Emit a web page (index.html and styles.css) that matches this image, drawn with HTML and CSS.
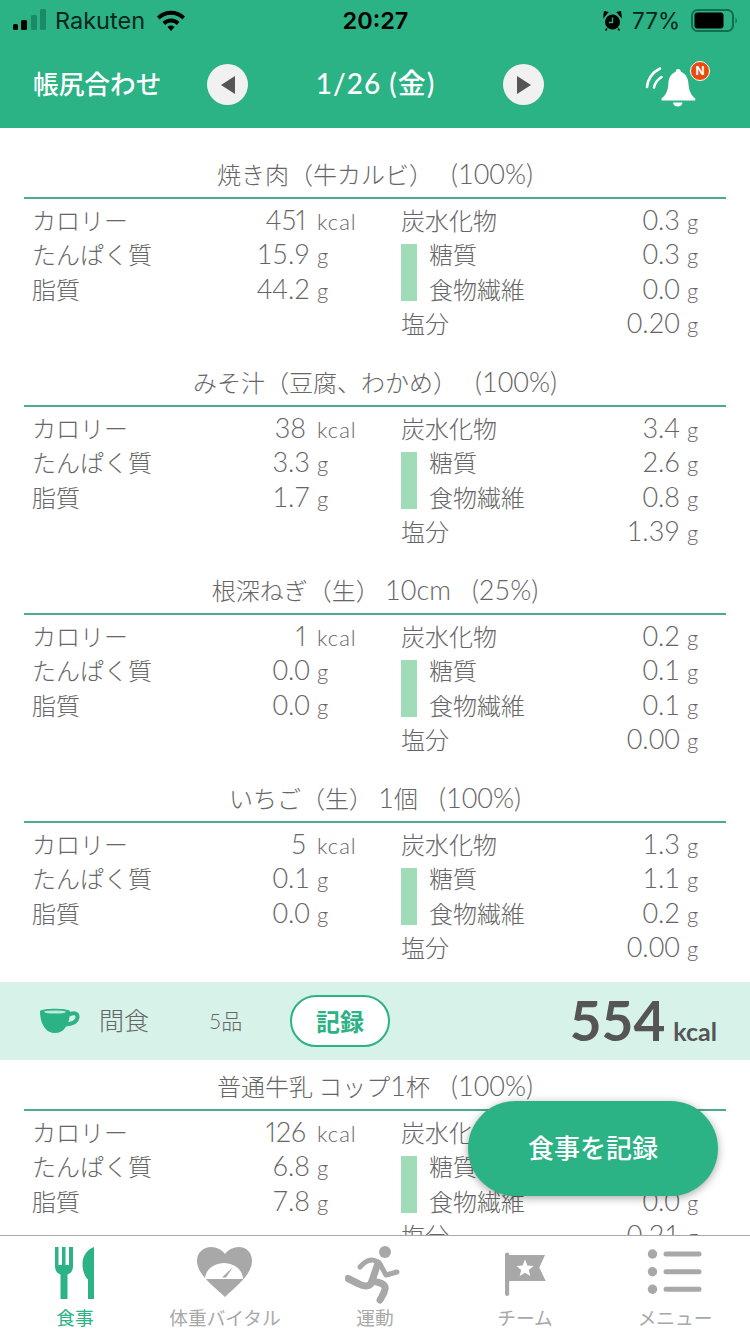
FILE: index.html
```html
<!DOCTYPE html>
<html lang="ja">
<head>
<meta charset="utf-8">
<title>食事</title>
<link rel="stylesheet" href="styles.css">
</head>
<body>
<div class="app">
  <header class="top">
    <div class="status">
      <div class="status-side">
        <svg class="signal" width="34" height="22" viewBox="0 0 34 22"><rect class="on" x="0" y="15" width="5" height="6" rx="1.5"/><rect class="on" x="8" y="11" width="6" height="10" rx="1.5"/><rect class="off" x="18" y="6" width="6" height="15" rx="1.5"/><rect class="off" x="27" y="0" width="6" height="21" rx="1.5"/></svg>
        <span class="carrier">Rakuten</span>
        <svg class="wifi" width="30" height="22" viewBox="0 0 30 22"><path d="M1 7.5a20 20 0 0 1 28 0l-2.6 3a16 16 0 0 0-22.800 0z"/><path d="M6.500 13a12 12 0 0 1 17 0l-2.700 3a8 8 0 0 0-11.600 0z"/><path d="M11.500 18a5 5 0 0 1 7 0L15 22z"/></svg>
      </div>
      <div class="clock">20:27</div>
      <div class="status-side end">
        <svg class="alarm" width="19" height="20" viewBox="0 0 19 20"><circle cx="9.500" cy="11" r="7.500"/><path d="M1 5.500 4.500 1.500 1.500.8zM18 5.500 14.500 1.500 17.500.8zM4 17.500 2.500 19.500M15 17.500 16.500 19.500" stroke="#000" stroke-width="1.400"/><path class="hands" d="M9.500 6.500V11.500H6"/></svg>
        <span class="percent">77%</span>
        <svg class="battery" width="47" height="24" viewBox="0 0 47 24"><rect class="shell" x="1" y="1" width="41" height="21" rx="5.500"/><rect x="3.500" y="3.500" width="29" height="16" rx="3"/><path class="cap" d="M44.500 8.500a4 4 0 0 1 0 6z"/></svg>
      </div>
    </div>
    <nav class="datebar">
      <h1 class="screen-title">帳尻合わせ</h1>
      <button class="step"><svg width="16" height="20" viewBox="0 0 16 20"><path d="M15 1V19L1 10z"/></svg></button>
      <div class="date">1/26 (金)</div>
      <button class="step"><svg width="16" height="20" viewBox="0 0 16 20"><path d="M1 1V19L15 10z"/></svg></button>
      <div class="bell">
        <svg width="67" height="50" viewBox="0 0 67 50"><path class="waves" d="M2 26C3 17 8 11 15 7.500M9 26.500C10 22 12.500 18.500 16.500 16"/><path class="body" d="M32.700 8c2 0 3 1.200 3.300 2.800C41 13 43 17 43.500 23c.5 7 2.500 11 6.800 14.500V39.500H16.500V37.500C20.800 34 23 30 23.300 23c.3-6 2.400-10 7.300-12.200.3-1.600 1.100-2.800 2.100-2.800z"/><path class="body" d="M28 41.500H37.500a4.800 4.800 0 0 1-9.500 0z"/></svg>
        <span class="badge">N</span>
      </div>
    </nav>
  </header>

  <main class="content">
    <section class="foods first">
      <article class="food">
        <h2 class="food-title">焼き肉（牛カルビ）<span class="lat pad">(100%)</span></h2>
        <div class="facts">
          <div class="col-left">
            <div class="fact"><span class="name">カロリー</span><span class="num int">451</span><span class="unit kcal">kcal</span></div>
            <div class="fact"><span class="name">たんぱく質</span><span class="num">15.9</span><span class="unit">g</span></div>
            <div class="fact"><span class="name">脂質</span><span class="num">44.2</span><span class="unit">g</span></div>
          </div>
          <div class="col-right">
            <div class="fact"><span class="name">炭水化物</span><span class="num">0.3</span><span class="unit">g</span></div>
            <div class="sub"><i class="bar"></i><div class="sub-rows">
              <div class="fact"><span class="name">糖質</span><span class="num">0.3</span><span class="unit">g</span></div>
              <div class="fact"><span class="name">食物繊維</span><span class="num">0.0</span><span class="unit">g</span></div>
            </div></div>
            <div class="fact"><span class="name">塩分</span><span class="num">0.20</span><span class="unit">g</span></div>
          </div>
        </div>
      </article>
      <article class="food">
        <h2 class="food-title">みそ汁（豆腐、わかめ）<span class="lat pad">(100%)</span></h2>
        <div class="facts">
          <div class="col-left">
            <div class="fact"><span class="name">カロリー</span><span class="num int">38</span><span class="unit kcal">kcal</span></div>
            <div class="fact"><span class="name">たんぱく質</span><span class="num">3.3</span><span class="unit">g</span></div>
            <div class="fact"><span class="name">脂質</span><span class="num">1.7</span><span class="unit">g</span></div>
          </div>
          <div class="col-right">
            <div class="fact"><span class="name">炭水化物</span><span class="num">3.4</span><span class="unit">g</span></div>
            <div class="sub"><i class="bar"></i><div class="sub-rows">
              <div class="fact"><span class="name">糖質</span><span class="num">2.6</span><span class="unit">g</span></div>
              <div class="fact"><span class="name">食物繊維</span><span class="num">0.8</span><span class="unit">g</span></div>
            </div></div>
            <div class="fact"><span class="name">塩分</span><span class="num">1.39</span><span class="unit">g</span></div>
          </div>
        </div>
      </article>
      <article class="food">
        <h2 class="food-title">根深ねぎ（生） <span class="lat">10cm</span><span class="lat near">(25%)</span></h2>
        <div class="facts">
          <div class="col-left">
            <div class="fact"><span class="name">カロリー</span><span class="num int">1</span><span class="unit kcal">kcal</span></div>
            <div class="fact"><span class="name">たんぱく質</span><span class="num">0.0</span><span class="unit">g</span></div>
            <div class="fact"><span class="name">脂質</span><span class="num">0.0</span><span class="unit">g</span></div>
          </div>
          <div class="col-right">
            <div class="fact"><span class="name">炭水化物</span><span class="num">0.2</span><span class="unit">g</span></div>
            <div class="sub"><i class="bar"></i><div class="sub-rows">
              <div class="fact"><span class="name">糖質</span><span class="num">0.1</span><span class="unit">g</span></div>
              <div class="fact"><span class="name">食物繊維</span><span class="num">0.1</span><span class="unit">g</span></div>
            </div></div>
            <div class="fact"><span class="name">塩分</span><span class="num">0.00</span><span class="unit">g</span></div>
          </div>
        </div>
      </article>
      <article class="food">
        <h2 class="food-title">いちご（生） <span class="lat">1</span>個<span class="lat near">(100%)</span></h2>
        <div class="facts">
          <div class="col-left">
            <div class="fact"><span class="name">カロリー</span><span class="num int">5</span><span class="unit kcal">kcal</span></div>
            <div class="fact"><span class="name">たんぱく質</span><span class="num">0.1</span><span class="unit">g</span></div>
            <div class="fact"><span class="name">脂質</span><span class="num">0.0</span><span class="unit">g</span></div>
          </div>
          <div class="col-right">
            <div class="fact"><span class="name">炭水化物</span><span class="num">1.3</span><span class="unit">g</span></div>
            <div class="sub"><i class="bar"></i><div class="sub-rows">
              <div class="fact"><span class="name">糖質</span><span class="num">1.1</span><span class="unit">g</span></div>
              <div class="fact"><span class="name">食物繊維</span><span class="num">0.2</span><span class="unit">g</span></div>
            </div></div>
            <div class="fact"><span class="name">塩分</span><span class="num">0.00</span><span class="unit">g</span></div>
          </div>
        </div>
      </article>
    </section>

    <section class="meal-band">
      <svg class="cup" width="40" height="26" viewBox="0 0 40 26"><path d="M0 3C3 0 27 0 30 3 30 15 25 25 15 25 5 25 0 15 0 3z"/><path class="cup-handle" d="M29 7C33 4 38 5 37.500 9.500 37 14 31 16 26 16.500"/><ellipse class="milk" cx="15" cy="4" rx="11" ry="1.600"/></svg>
      <span class="meal-name">間食</span>
      <span class="meal-count">5品</span>
      <button class="record">記録</button>
      <div class="meal-total"><b>554</b><span>kcal</span></div>
    </section>

    <section class="foods">
      <article class="food">
        <h2 class="food-title">普通牛乳 コップ<span class="lat">1</span>杯<span class="lat near">(100%)</span></h2>
        <div class="facts">
          <div class="col-left">
            <div class="fact"><span class="name">カロリー</span><span class="num int">126</span><span class="unit kcal">kcal</span></div>
            <div class="fact"><span class="name">たんぱく質</span><span class="num">6.8</span><span class="unit">g</span></div>
            <div class="fact"><span class="name">脂質</span><span class="num">7.8</span><span class="unit">g</span></div>
          </div>
          <div class="col-right">
            <div class="fact"><span class="name">炭水化物</span><span class="num">9.9</span><span class="unit">g</span></div>
            <div class="sub"><i class="bar"></i><div class="sub-rows">
              <div class="fact"><span class="name">糖質</span><span class="num">9.9</span><span class="unit">g</span></div>
              <div class="fact"><span class="name">食物繊維</span><span class="num">0.0</span><span class="unit">g</span></div>
            </div></div>
            <div class="fact"><span class="name">塩分</span><span class="num">0.21</span><span class="unit">g</span></div>
          </div>
        </div>
      </article>
    </section>
  </main>

  <button class="fab">食事を記録</button>

  <footer class="tabs">
    <div class="tab active">
      <svg width="60" height="60" viewBox="0 0 60 60"><path d="M10 3H13.500V21H17V3H20.500V21H24V3H28V22C28 27 25.500 29.500 22.500 30.500V55H15.500V30.500C12.500 29.500 10 27 10 22z"/><path d="M49 3V55H43V35.500C40 33 37.500 27 37.500 20 37.500 11 43 5 49 3z"/></svg>
      <span>食事</span>
    </div>
    <div class="tab">
      <svg width="60" height="60" viewBox="0 0 60 60"><path d="M30 53C20 43 2 31 2 17 2 8 9 3 16 3 22 3 27 6 30 10 33 6 38 3 44 3 51 3 57 8 57 17 57 31 40 43 30 53z"/><path class="cut" d="M10 35C10 26 19 19 29 19 39 19 48 26 48 35z"/><path class="needle" d="M27 33.500 38 23 31 33.500z"/></svg>
      <span>体重バイタル</span>
    </div>
    <div class="tab">
      <svg width="60" height="60" viewBox="0 0 60 60"><circle cx="40" cy="8" r="6"/><path class="limb wide" d="M33 19 27 37M27 37C34 38 41 40 40 45 39.500 49 37 52 35 56"/><path class="limb wide" d="M27 37C26 43 19 43 14 40 10 38 6 36 3 34.500"/><path class="limb" d="M33 18C27 14 21 16 15 23"/><path class="limb" d="M35 20 41 31 52 28"/></svg>
      <span>運動</span>
    </div>
    <div class="tab">
      <svg width="60" height="60" viewBox="0 0 60 60"><path d="M10 10.500a2.100 2.100 0 0 1 4.200 0V11H50L44.300 23.500 50.700 37H14.200V50a2.100 2.100 0 0 1-4.200 0z"/><path class="cut" d="M30 15.500 32.400 21.500 38.500 21.900 33.800 25.900 35.300 32 30 28.700 24.700 32 26.200 25.900 21.500 21.900 27.600 21.500z"/></svg>
      <span>チーム</span>
    </div>
    <div class="tab">
      <svg width="60" height="60" viewBox="0 0 60 60"><circle cx="7.500" cy="10" r="4.700"/><circle cx="7.500" cy="27.700" r="4.700"/><circle cx="7.500" cy="45.300" r="4.700"/><path class="limb" d="M21 10H54M21 27.700H54M21 45.300H54"/></svg>
      <span>メニュー</span>
    </div>
  </footer>
</div>
</body>
</html>
```

FILE: styles.css
```css
* { box-sizing: border-box; }

html, body {
  margin: 0;
  width: 750px;
  height: 1334px;
  overflow: hidden;
  background: #fff;
}

body {
  font-family: "Lato", "Noto Sans CJK JP", sans-serif;
  color: #666;
}

.app {
  position: relative;
  display: flex;
  flex-direction: column;
  width: 750px;
  height: 1334px;
}

/* Green header with the system status row */
.top {
  flex: none;
  height: 128px;
  background: #2bb285;
}

.status {
  display: flex;
  align-items: center;
  height: 41px;
  padding: 0 12px 0 13px;
  color: #000;
  font-family: "Inter", "Liberation Sans", sans-serif;
  font-size: 23.500px;
}

.status-side {
  flex: 1;
  display: flex;
  align-items: center;
}

.status-side.end { justify-content: flex-end; }

.signal { margin-right: 8px; margin-top: -2px; }
.signal .on { fill: #000; }
.signal .off { fill: #1c8a66; }

.carrier { margin-right: 11px; color: #04261b; }
.wifi { margin-top: -2px; }

.clock { font-weight: 600; font-size: 23.500px; }

.alarm { margin-right: 10px; }
.alarm .hands { fill: none; stroke: #2bb285; stroke-width: 1.4; }

.percent { margin-right: 11px; color: #04261b; font-size: 22.500px; }

.battery .shell { fill: none; stroke: #126e50; stroke-width: 2; }
.battery .cap { fill: #126e50; }

.datebar {
  display: grid;
  grid-template-columns: 174px 41px 255px 41px 206px;
  align-items: center;
  height: 87px;
  padding-left: 33px;
  color: #fff;
}

.screen-title {
  margin: 0 0 2px;
  font: 500 25.700px/1.2 "Noto Sans CJK JP", sans-serif;
  white-space: nowrap;
}

.step {
  display: flex;
  align-items: center;
  justify-content: center;
  width: 41px;
  height: 41px;
  padding: 0;
  border: 0;
  border-radius: 50%;
  background: #f1f1f1;
}

.step path { fill: #555; }

.date {
  padding-bottom: 4px;
  text-align: center;
  font: 500 28px/1 "Lato", "Noto Sans CJK JP", sans-serif;
  letter-spacing: 1px;
}

.bell {
  position: relative;
  display: flex;
  justify-content: flex-end;
  padding: 2px 38px 0 0;
}

.bell .waves { fill: none; stroke: #fff; stroke-width: 2.600; stroke-linecap: round; }
.bell .body { fill: #fff; }

.badge {
  position: absolute;
  top: 2px;
  right: 40px;
  width: 20px;
  height: 20px;
  border: 1px solid #fff;
  border-radius: 50%;
  background: #ea4a0c;
  color: #fff;
  font: 700 12px/18px "Inter", sans-serif;
  text-align: center;
}

.content {
  flex: 1;
  min-height: 0;
  overflow: hidden;
}

.foods {
  display: flex;
  flex-direction: column;
  gap: 3px;
  padding-top: 5px;
}

.foods.first { padding-top: 25px; }

.food { padding: 0 24px 17.670px; }

.food-title {
  display: block;
  height: 46px;
  margin: 0;
  border-bottom: 2px solid #4fa891;
  text-align: center;
  font: 300 24px/42px "Noto Sans CJK JP", sans-serif;
  white-space: pre;
}

.lat { font-family: "Lato", sans-serif; font-size: 27px; }
.pad { margin-left: 18px; }
.near { margin-left: 21px; }

.facts {
  display: flex;
  padding: 4px 0 0 8px;
}

.col-left { width: 369px; }
.col-right { width: 298px; }

.fact {
  display: flex;
  align-items: baseline;
  height: 34.330px;
  font: 300 24px/34.330px "Noto Sans CJK JP", sans-serif;
  white-space: nowrap;
}

.name { flex: 1; }

.num {
  font: 300 27px/34.330px "Lato", sans-serif;
}

.num.int { font-variant-numeric: proportional-nums; }

.unit {
  font: 300 22px/34.330px "Lato", sans-serif;
}

.col-left .unit { width: 39px; margin: 0 45px 0 7px; }
.col-left .unit.kcal { margin-left: 11px; letter-spacing: 1px; }
.col-right .unit { width: 12px; margin-left: 7px; }

.sub {
  display: flex;
  align-items: center;
  gap: 12px;
}

.bar {
  flex: none;
  width: 16px;
  height: 57px;
  margin-top: 2px;
  background: #a1dcb8;
}

.sub-rows { flex: 1; }

/* Meal header band */
.meal-band {
  display: flex;
  align-items: center;
  height: 78px;
  padding: 0 33px 0 40px;
  background: #d7f2e9;
}

.cup { flex: none; fill: #2bb285; }
.cup-handle { fill: none; stroke: #2bb285; stroke-width: 4; }
.cup .milk { fill: #bfe9da; }

.meal-name {
  margin-left: 19px;
  padding-bottom: 2px;
  width: 110px;
  font: 300 25px/1 "Noto Sans CJK JP", sans-serif;
}

.meal-count {
  width: 81px;
  font: 300 21px/1 "Lato", "Noto Sans CJK JP", sans-serif;
}

.record {
  width: 100px;
  height: 52px;
  padding: 0;
  border: 2px solid #2bb285;
  border-radius: 26px;
  background: #fff;
  color: #2bb285;
  font: 700 24px/1 "Noto Sans CJK JP", sans-serif;
}

.meal-total {
  margin-left: auto;
  display: flex;
  align-items: baseline;
  gap: 8px;
  color: #555;
}

.meal-total b { font: 700 55px/1 "Lato", sans-serif; }
.meal-total span { font: 700 25px/1 "Lato", sans-serif; }

/* Floating action button */
.fab {
  position: absolute;
  left: 468px;
  top: 1101px;
  width: 250px;
  height: 95px;
  padding: 0 0 3px;
  border: 0;
  border-radius: 48px;
  background: #2bb285;
  box-shadow: 0 2px 8px rgba(0, 0, 0, .35);
  color: #fff;
  font: 500 26px/1 "Noto Sans CJK JP", sans-serif;
}

/* Bottom tab bar */
.tabs {
  flex: none;
  display: grid;
  grid-template-columns: repeat(5, 150px);
  height: 99px;
  padding-top: 8px;
  border-top: 1px solid #aaa;
  background: #fff;
}

.tab {
  display: flex;
  flex-direction: column;
  align-items: center;
  color: #a8a8a8;
  fill: #a8a8a8;
  font: 400 18.700px/26px "Noto Sans CJK JP", sans-serif;
}

.tab.active { color: #2bb285; fill: #2bb285; }

.tab svg { flex: none; }

.tab .cut { fill: #fff; }
.tab .needle { fill: #a8a8a8; }

.tab .limb {
  fill: none;
  stroke: #a8a8a8;
  stroke-width: 5;
  stroke-linecap: round;
  stroke-linejoin: round;
}

.tab .limb.wide { stroke-width: 7; }
```
